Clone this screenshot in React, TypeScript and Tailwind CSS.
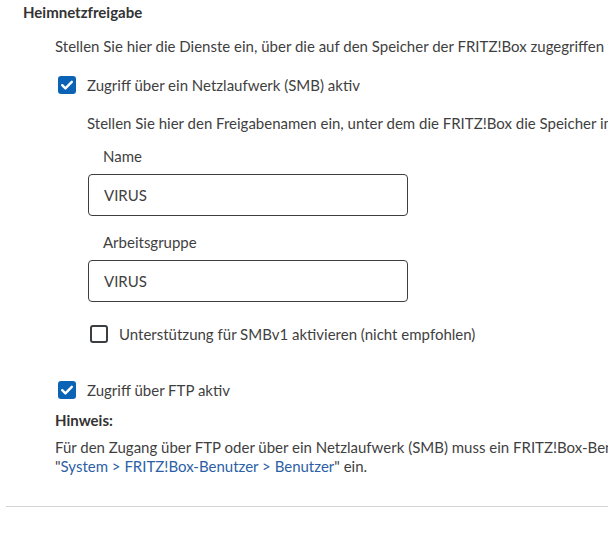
import React from 'react'

const CheckBox = ({ checked }: { checked: boolean }) => {
  if (checked) {
    return (
      <span className="flex h-[18px] w-[18px] shrink-0 items-center justify-center rounded-[3px] bg-[#0b63b5]">
        <svg width="14" height="14" viewBox="0 0 14 14" fill="none">
          <path d="M2.2 7.2l3.2 3.2 6.4-6.6" stroke="#fff" strokeWidth={2.4} strokeLinecap="round" strokeLinejoin="round" />
        </svg>
      </span>
    )
  }
  return <span className="block h-[18px] w-[18px] shrink-0 rounded-[3px] border-2 border-[#3c3f42] bg-white" />
}

const Field = ({ label, value }: { label: string; value: string }) => (
  <div>
    <div className="pl-[15px] leading-[20px]">{label}</div>
    <div className="mt-[8px] flex h-[42px] w-[320px] items-center rounded-[4px] border border-[#3c3f42] px-[15px]">
      {value}
    </div>
  </div>
)

const App = () => {
  return (
    <div
      className="h-[549px] w-[608px] overflow-hidden bg-white text-[15px] text-[#3f3f3f]"
      style={{ fontFamily: 'Lato, "Noto Sans", sans-serif' }}
    >
      <div className="w-[900px] pt-[2px]">
        <h2 className="pl-[23px] font-bold leading-[20px] text-[#333]">Heimnetzfreigabe</h2>

        <div className="pl-[55px]">
          <p className="mt-[14px] whitespace-nowrap leading-[20px]">
            Stellen Sie hier die Dienste ein, über die auf den Speicher der FRITZ!Box zugegriffen werden kann.
          </p>

          {/* SMB */}
          <label className="mt-[19px] flex items-center gap-[11px] pl-[3px] leading-[20px]">
            <CheckBox checked />
            <span>Zugriff über ein Netzlaufwerk (SMB) aktiv</span>
          </label>

          <div className="pl-[32px]">
            <p className="mt-[18px] whitespace-nowrap leading-[20px]">
              Stellen Sie hier den Freigabenamen ein, unter dem die FRITZ!Box die Speicher im Heimnetz bereitstellt.
            </p>
            <div className="mt-[13px] pl-[1px]">
              <Field label="Name" value="VIRUS" />
            </div>
            <div className="mt-[16px] pl-[1px]">
              <Field label="Arbeitsgruppe" value="VIRUS" />
            </div>
            <label className="mt-[22px] flex items-center gap-[11px] pl-[3px] leading-[20px]">
              <CheckBox checked={false} />
              <span>Unterstützung für SMBv1 aktivieren (nicht empfohlen)</span>
            </label>
          </div>

          {/* FTP */}
          <label className="mt-[36px] flex items-center gap-[11px] pl-[3px] leading-[20px]">
            <CheckBox checked />
            <span>Zugriff über FTP aktiv</span>
          </label>

          <div className="mt-[10px] font-bold leading-[20px] text-[#333]">Hinweis:</div>
          <p className="mt-[8px] whitespace-nowrap leading-[19px]">
            Für den Zugang über FTP oder über ein Netzlaufwerk (SMB) muss ein FRITZ!Box-Benutzer eingerichtet sein. Richten Sie Benutzer unter
            <br />
            "<a className="text-[#2c5fa6]">System &gt; FRITZ!Box-Benutzer &gt; Benutzer</a>" ein.
          </p>
        </div>

        <div className="ml-[6px] mt-[30px] h-px bg-[#d4d4d4]" />
      </div>
    </div>
  )
}

export default App
